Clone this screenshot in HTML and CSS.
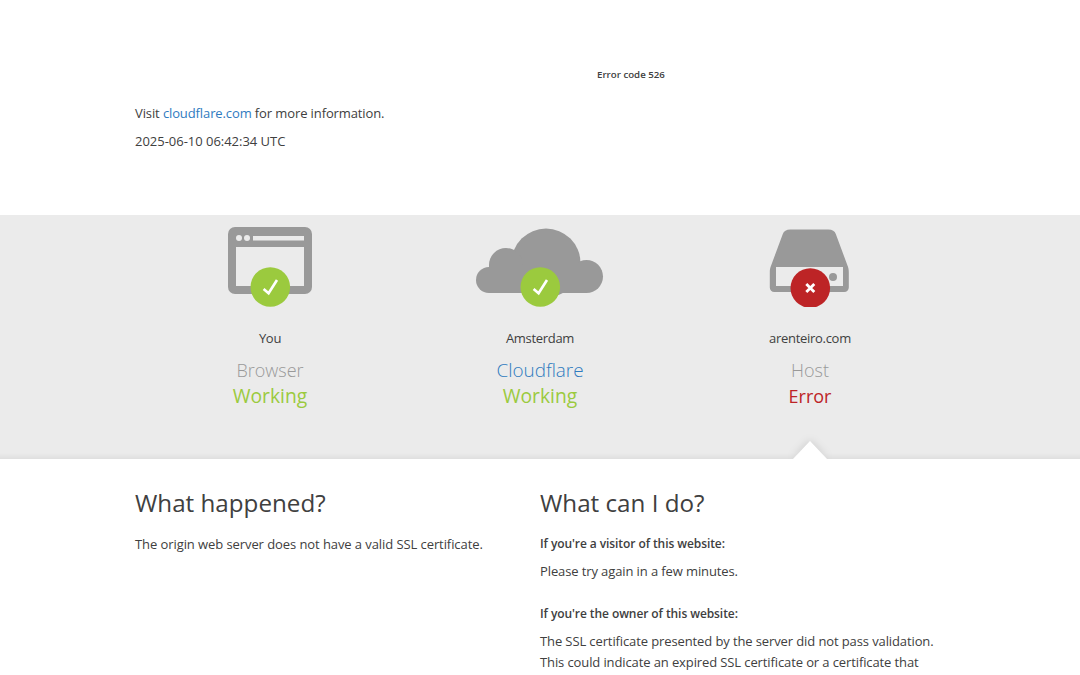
FILE: index.html
```html
<!DOCTYPE html>
<html lang="en">
<head>
<meta charset="utf-8">
<title>arenteiro.com | 526: Invalid SSL certificate</title>
<link rel="stylesheet" href="styles.css">
</head>
<body>
<header class="top">
  <div class="wrap">
    <p class="code">Error code 526</p>
    <p class="visit">Visit <a href="#">cloudflare.com</a> for more information.</p>
    <p class="stamp">2025-06-10 06:42:34 UTC</p>
  </div>
</header>
<section class="band">
  <div class="wrap cols">
    <div class="node">
      <svg class="icon" viewBox="-70 0 140 82" width="140" height="82" aria-hidden="true">
        <rect x="-42" y="2" width="84" height="67" rx="7" fill="#999"/>
        <rect x="-34" y="22" width="68" height="39" fill="#ebebeb"/>
        <rect x="-17" y="11" width="51" height="4.500" fill="#ebebeb"/>
        <circle cx="-31" cy="13" r="3" fill="#ebebeb"/>
        <circle cx="-23" cy="13" r="3" fill="#ebebeb"/>
        <circle cx="0.300" cy="62" r="19.800" fill="#9bca3e"/>
        <path d="M-6.400 64l5 4.300 8.400-13.300" fill="none" stroke="#fff" stroke-width="2.600"/>
      </svg>
      <p class="place">You</p>
      <p class="role grey">Browser</p>
      <p class="state ok">Working</p>
    </div>
    <div class="node">
      <svg class="icon" viewBox="-70 0 140 82" width="140" height="82" aria-hidden="true">
        <g fill="#999">
          <circle cx="6" cy="38" r="34.500"/>
          <circle cx="-34" cy="40" r="17"/>
          <circle cx="-51" cy="55" r="13"/>
          <circle cx="46.500" cy="51.500" r="16.500"/>
          <rect x="-51" y="40" width="97.500" height="28"/>
        </g>
        <circle cx="0.300" cy="62" r="19.800" fill="#9bca3e"/>
        <path d="M-6.400 64l5 4.300 8.400-13.300" fill="none" stroke="#fff" stroke-width="2.600"/>
      </svg>
      <p class="place">Amsterdam</p>
      <p class="role blue">Cloudflare</p>
      <p class="state ok">Working</p>
    </div>
    <div class="node source">
      <svg class="icon" viewBox="-70 0 140 82" width="140" height="82" aria-hidden="true">
        <path d="M-19.700 4.500h38c4 0 6.500 1.500 7.500 4.500l11.500 31c1.200 2.800 1.500 4.500 1.500 7.500v15c0 2.500-2 4.500-4.500 4.500h-70c-2.500 0-4.500-2-4.500-4.500v-15c0-3 .3-4.700 1.500-7.500l11.500-31c1-3 3.500-4.500 7.500-4.500z" fill="#999"/>
        <rect x="-34" y="42" width="67" height="19" fill="#ebebeb"/>
        <circle cx="23" cy="52" r="4" fill="#999"/>
        <circle cx="0.300" cy="63" r="19.800" fill="#bd2426"/>
        <path d="M-3.700 59l8 8m0-8l-8 8" fill="none" stroke="#fff" stroke-width="2.800"/>
      </svg>
      <p class="place">arenteiro.com</p>
      <p class="role grey">Host</p>
      <p class="state bad">Error</p>
    </div>
  </div>
</section>
<main class="wrap details">
  <div class="col">
    <h2>What happened?</h2>
    <p class="lead">The origin web server does not have a valid SSL certificate.</p>
  </div>
  <div class="col">
    <h2>What can I do?</h2>
    <h5>If you're a visitor of this website:</h5>
    <p class="after">Please try again in a few minutes.</p>
    <h5 class="second">If you're the owner of this website:</h5>
    <p class="after">The SSL certificate presented by the server did not pass validation. This could indicate an expired SSL certificate or a certificate that</p>
  </div>
</main>
</body>
</html>
```
FILE: styles.css
```css
html, body {
  margin: 0;
  height: 675px;
  overflow: hidden;
  background: #fff;
}
body {
  font-family: "Open Sans", "Noto Sans", sans-serif;
  font-size: 13px;
  letter-spacing: -0.11px;
  color: #404040;
}
p, h2, h5 { margin: 0; }
.wrap {
  width: 810px;
  margin: 0 auto;
}
.top { height: 215px; }
.top .wrap { padding-top: 68px; }
.code {
  font-size: 9.700px;
  font-weight: 600;
  line-height: 14px;
  letter-spacing: 0;
  padding-left: 462px;
}
.visit { margin-top: 20px; line-height: 22px; }
.stamp { margin-top: 6px; line-height: 22px; letter-spacing: -0.02px; }
a { color: #2f7bbf; text-decoration: none; }
.band {
  height: 244px;
  background: linear-gradient(to top, #dfdfdf, #ebebeb 6px);
  overflow: hidden;
}
.cols { display: grid; grid-template-columns: repeat(3, 270px); }
.node {
  position: relative;
  height: 244px;
  text-align: center;
  padding-top: 10px;
  box-sizing: border-box;
}
.icon { display: block; margin: 0 auto; }
.place { margin-top: 20px; line-height: 22px; letter-spacing: -0.3px; }
.role { margin-top: 8px; font-size: 18px; font-weight: 300; line-height: 26px; letter-spacing: 0; }
.state { font-size: 18px; line-height: 26px; letter-spacing: 0; }
.grey { color: #999; }
.blue { color: #2f7bbf; font-size: 18.900px; }
.ok { color: #9bca3e; font-size: 19.300px; }
.bad { color: #bd2426; }
.source::after {
  content: "";
  position: absolute;
  left: 50%;
  bottom: 0;
  margin-left: -17px;
  border-left: 17px solid transparent;
  border-right: 17px solid transparent;
  border-bottom: 18px solid #fff;
  filter: drop-shadow(0 -1px 4px rgba(0,0,0,.12));
}
.details {
  display: grid;
  grid-template-columns: 405px 405px;
  padding-top: 28px;
}
.col:first-child { padding-right: 30px; }
h2 { font-size: 24.200px; font-weight: 400; line-height: 32px; letter-spacing: 0; }
.lead { margin-top: 14px; line-height: 22px; letter-spacing: -0.08px; }
h5 { font-size: 12px; font-weight: 600; line-height: 22px; margin-top: 14px; letter-spacing: -0.08px; }
.after { margin-top: 6px; line-height: 21px; }
.second { margin-top: 21px; }
```
